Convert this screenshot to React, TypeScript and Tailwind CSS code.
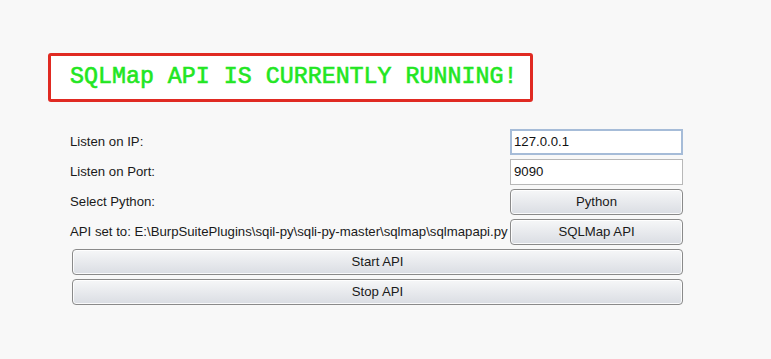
export default function App() {
  const btn =
    "h-[26px] rounded-[4px] border border-[#8a8a8a] bg-gradient-to-b from-[#f6f7f8] to-[#dadde3] text-[13.2px] text-[#1a1a1a] flex items-center justify-center shadow-[inset_0_0_0_1px_rgba(255,255,255,0.85)]";
  return (
    <div
      className="w-[771px] h-[359px] bg-[#f8f8f8] overflow-hidden"
      style={{ fontFamily: '"Liberation Sans", Arial, sans-serif' }}
    >
      <div className="pt-[53px] pl-[48px]">
        <div className="w-[485px] h-[49px] border-[3px] border-[#e02a22] rounded-[3px] bg-white flex items-center pl-[19px] pt-[1px]">
          <span
            className="text-[23.3px] font-normal text-[#22e622] leading-none [-webkit-text-stroke:0.6px_#22e622]"
            style={{ fontFamily: '"Liberation Mono", "Courier New", monospace' }}
          >
            SQLMap API IS CURRENTLY RUNNING!
          </span>
        </div>
      </div>
      <div className="mt-[27px] ml-[70px] w-[613px] flex flex-col gap-[4px]">
        <div className="flex items-center h-[26px]">
          <span className="flex-1 text-[13.2px] text-[#1a1a1a]">Listen on IP:</span>
          <div className="w-[173px] h-[26px] border-2 border-[#a6bcd8] bg-white flex items-center pl-[2px] text-[13.2px] text-[#111]">
            127.0.0.1
          </div>
        </div>
        <div className="flex items-center h-[26px]">
          <span className="flex-1 text-[13.2px] text-[#1a1a1a]">Listen on Port:</span>
          <div className="w-[173px] h-[26px] border border-[#b8b8b8] bg-white flex items-center pl-[3px] text-[13.2px] text-[#111]">
            9090
          </div>
        </div>
        <div className="flex items-center h-[26px]">
          <span className="flex-1 text-[13.2px] text-[#1a1a1a]">Select Python:</span>
          <div className={"w-[173px] " + btn}>Python</div>
        </div>
        <div className="flex items-center h-[26px]">
          <span className="flex-1 text-[13.2px] text-[#1a1a1a] whitespace-nowrap">
            API set to: E:\BurpSuitePlugins\sqil-py\sqli-py-master\sqlmap\sqlmapapi.py
          </span>
          <div className={"w-[173px] shrink-0 " + btn}>SQLMap API</div>
        </div>
        <div className={"ml-[2px] " + btn}>Start API</div>
        <div className={"ml-[2px] " + btn}>Stop API</div>
      </div>
    </div>
  );
}
